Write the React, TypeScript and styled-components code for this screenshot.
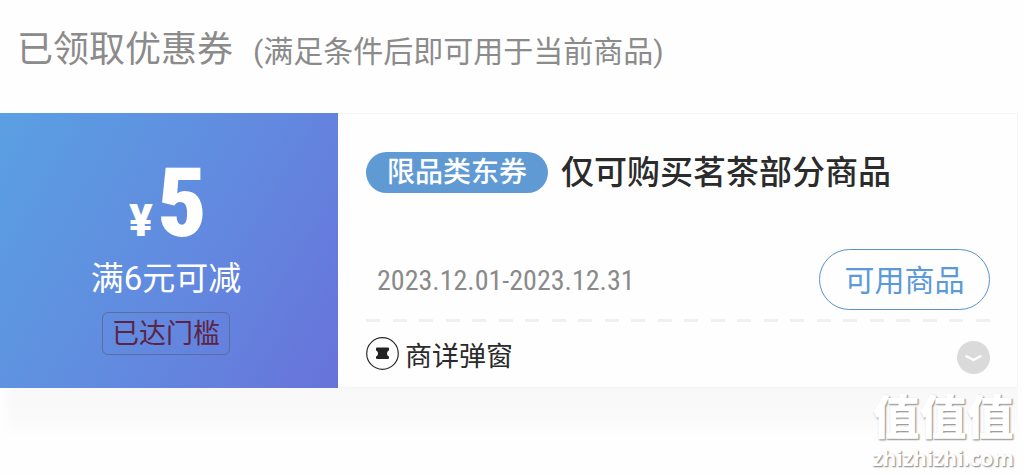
import React from "react";
import styled, { createGlobalStyle } from "styled-components";

const GlobalStyle = createGlobalStyle`
  * { box-sizing: border-box; }
  body {
    margin: 0;
    background: #fefefe;
    color: #2b2b2b;
    font-family: Roboto, "Noto Sans CJK SC", sans-serif;
  }
  h1, h2, p { margin: 0; font-weight: 400; }
  button { font: inherit; padding: 0; cursor: pointer; }
`;

const Page = styled.main`
  position: relative;
  padding: 24px 5px 37px 0;
`;

const Header = styled.header`
  display: flex;
  align-items: center;
  gap: 20px;
  height: 89px;
  padding: 0 0 37px 17px;
  color: #8b8b8b;
  white-space: nowrap;
`;

const Heading = styled.h1`
  font-size: 36px;
  line-height: 52px;
`;

const Hint = styled.p`
  padding-top: 4px;
  font-size: 30px;
  line-height: 44px;
`;

const Card = styled.article`
  display: flex;
  height: 275px;
  background: #fefefe;
`;

const Value = styled.section`
  flex: 0 0 338px;
  display: flex;
  flex-direction: column;
  align-items: center;
  padding: 48px 6px 0 0;
  background: linear-gradient(120deg, #5aa0e2 0%, #6288df 58%, #6873da 100%);
  color: #fff;
`;

const Price = styled.p`
  display: flex;
  align-items: baseline;
  gap: 5px;
  padding-left: 4px;
  font-family: "Roboto Condensed", Roboto, sans-serif;
  font-weight: 900;
  font-size: 96px;
  line-height: 84px;
`;

const Currency = styled.span`
  font-family: Roboto, sans-serif;
  font-size: 44px;
  line-height: 44px;
`;

const Condition = styled.p`
  margin-top: 10px;
  font-size: 33px;
  line-height: 48px;
`;

const Reached = styled.span`
  margin-top: 9px;
  padding: 1px 9px 0;
  border: 1px solid #5d6c9c;
  border-radius: 6px;
  color: #5c2442;
  font-size: 27px;
  line-height: 40px;
`;

const Details = styled.section`
  flex: 1;
  display: flex;
  flex-direction: column;
  padding: 37px 27px 0 28px;
  border: 1px solid #f4f4f4;
  border-left: 0;
`;

const TitleRow = styled.div`
  display: flex;
  align-items: center;
  gap: 13px;
  height: 42px;
  white-space: nowrap;
`;

const Category = styled.span`
  padding: 1px 21px 0;
  border-radius: 21px;
  background: #609ad4;
  color: #fff;
  font-size: 28px;
  font-weight: 500;
  line-height: 40px;
`;

const Title = styled.h2`
  padding-top: 2px;
  font-size: 33px;
  font-weight: 500;
  line-height: 42px;
`;

const UseRow = styled.div`
  display: flex;
  align-items: center;
  justify-content: space-between;
  margin-top: 56px;
  padding-left: 11px;
`;

const Period = styled.p`
  padding-top: 2px;
  color: #8a8a8a;
  font-family: "Roboto Condensed", Roboto, sans-serif;
  font-size: 28px;
  line-height: 40px;
`;

const UseButton = styled.button`
  width: 171px;
  height: 61px;
  padding-bottom: 4px;
  border: 1px solid #5c92c8;
  border-radius: 31px;
  background: transparent;
  color: #5a9ad8;
  font-size: 30px;
`;

const Divider = styled.hr`
  width: 100%;
  height: 3px;
  margin: 9px 0 0;
  border: 0;
  background: repeating-linear-gradient(
    90deg,
    #f0f0f0 0 14px,
    transparent 14px 27px,
    #f0f0f0 27px 41px,
    transparent 41px 53px
  );
`;

const SourceRow = styled.div`
  display: flex;
  align-items: flex-start;
  justify-content: space-between;
  margin-top: 15px;
`;

const Source = styled.div`
  display: flex;
  gap: 6px;
  font-size: 27px;
  line-height: 40px;
`;

const ExpandButton = styled.button`
  width: 33px;
  height: 33px;
  margin-top: 4px;
  border: 0;
  border-radius: 50%;
  background: #dadada;

  svg { display: block; }
`;

const Shade = styled.div`
  height: 50px;
  background:
    linear-gradient(90deg, #fefefe, transparent 14px),
    linear-gradient(#f8f8f8, #fafafa 60%, #fefefe);
`;

const Watermark = styled.div`
  position: absolute;
  top: 388px;
  right: 9px;
  display: flex;
  flex-direction: column;
  align-items: center;
  color: #fff;
  text-shadow: 1px 1px 1px #999, 1px 1px 2px #bbb;
`;

const MarkName = styled.span`
  font-size: 47px;
  font-weight: 900;
  line-height: 60px;
`;

const MarkSite = styled.span`
  font-family: "Open Sans", sans-serif;
  font-size: 21px;
  font-weight: 700;
  line-height: 20px;
`;

const TicketIcon = () => (
  <svg width="33" height="33" viewBox="0 0 33 33" aria-hidden="true">
    <circle cx="16.500" cy="16.500" r="15.800" fill="none" stroke="#2b2b2b" strokeWidth="1.200" />
    <path
      d="M11 10.500h11q1 0 1 1v1.500q0 1-1 1-1 1-1 2.500t1 2.500q1 0 1 1v1q0 1-1 1H11q-1 0-1-1v-1q0-1 1-1 1-1 1-2.500T11 14q-1 0-1-1v-1.500q0-1 1-1z"
      fill="#222"
    />
  </svg>
);

const ChevronIcon = () => (
  <svg width="33" height="33" viewBox="0 0 33 33" aria-hidden="true">
    <path
      d="M9.500 15.300l7 3.700 7-3.700"
      fill="none"
      stroke="#fff"
      strokeWidth="2.400"
      strokeLinecap="round"
      strokeLinejoin="round"
    />
  </svg>
);

export default function App() {
  return (
    <>
      <GlobalStyle />
      <Page>
        <Header>
          <Heading>已领取优惠券</Heading>
          <Hint>(满足条件后即可用于当前商品)</Hint>
        </Header>
        <Card>
          <Value>
            <Price>
              <Currency>¥</Currency>5
            </Price>
            <Condition>满6元可减</Condition>
            <Reached>已达门槛</Reached>
          </Value>
          <Details>
            <TitleRow>
              <Category>限品类东券</Category>
              <Title>仅可购买茗茶部分商品</Title>
            </TitleRow>
            <UseRow>
              <Period>2023.12.01-2023.12.31</Period>
              <UseButton type="button">可用商品</UseButton>
            </UseRow>
            <Divider />
            <SourceRow>
              <Source>
                <TicketIcon />
                商详弹窗
              </Source>
              <ExpandButton type="button" aria-label="展开">
                <ChevronIcon />
              </ExpandButton>
            </SourceRow>
          </Details>
        </Card>
        <Shade />
        <Watermark>
          <MarkName>值值值</MarkName>
          <MarkSite>zhizhizhi.com</MarkSite>
        </Watermark>
      </Page>
    </>
  );
}
